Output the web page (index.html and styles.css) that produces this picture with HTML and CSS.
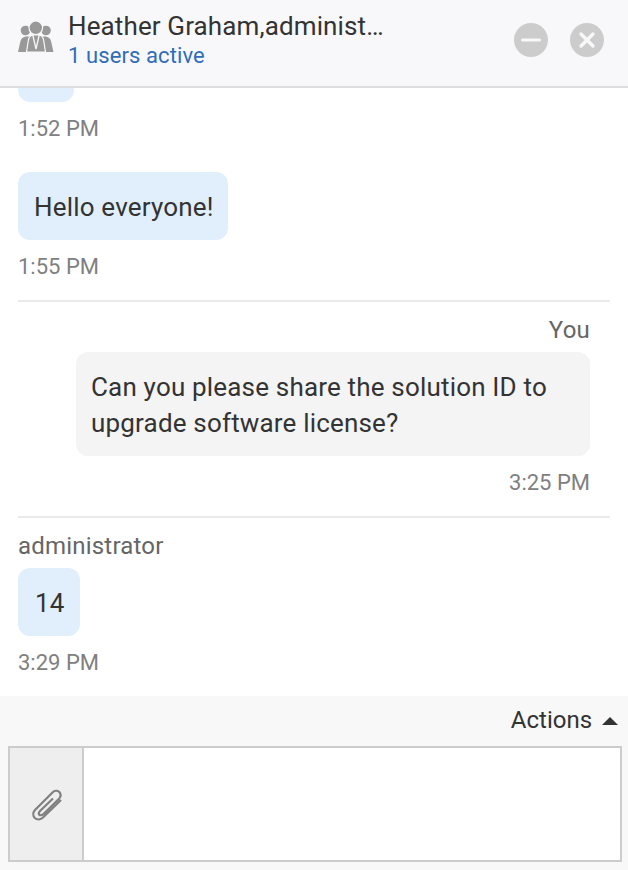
FILE: index.html
```html
<!DOCTYPE html>
<html lang="en">
<head>
<meta charset="utf-8">
<title>Chat</title>
<link rel="stylesheet" href="styles.css">
</head>
<body>
<div class="chat">
  <header class="head">
    <svg class="group" viewBox="0 0 36 32" width="36" height="32">
      <g fill="#999">
        <circle cx="7.500" cy="9.500" r="4.800"/><circle cx="28" cy="9.500" r="4.800"/>
        <path d="M0 31 L2.500 20 Q3.500 16 8 15.500 L12 15.500 L12 31 Z"/>
        <path d="M35.500 31 L33 20 Q32 16 27.500 15.500 L23.500 15.500 L23.500 31 Z"/>
      </g>
      <g fill="#999" stroke="#f8f8fa" stroke-width="1.200">
        <circle cx="17.800" cy="6.800" r="6.800"/>
        <path d="M8.500 31 L10.500 18.500 Q11.500 14.500 15 14 L21 14 Q24.500 14.500 25.500 18.500 L27.500 31 Z"/>
      </g>
      <path d="M14.800 14 L18 28 L21.200 14" fill="none" stroke="#f8f8fa" stroke-width="1.300"/>
    </svg>
    <div class="titles">
      <div class="name">Heather Graham,administ…</div>
      <div class="active">1 users active</div>
    </div>
    <div class="btns">
      <svg class="btn" viewBox="0 0 34 34" width="34" height="34"><circle cx="17" cy="17" r="17" fill="#ccc"/><path d="M8.500 17 H25.500" stroke="#f8f8fa" stroke-width="3" stroke-linecap="round"/></svg>
      <svg class="btn" viewBox="0 0 34 34" width="34" height="34"><circle cx="17" cy="17" r="17" fill="#ccc"/><path d="M11 11 L23 23 M23 11 L11 23" stroke="#f8f8fa" stroke-width="3.400" stroke-linecap="round"/></svg>
    </div>
  </header>
  <main class="log">
    <div class="group-msg first">
      <div class="bubble in stub"></div>
      <div class="time">1:52 PM</div>
      <div class="bubble in spaced">Hello everyone!</div>
      <div class="time">1:55 PM</div>
    </div>
    <div class="group-msg mine">
      <div class="who">You</div>
      <div class="bubble out">Can you please share the solution ID to upgrade software license?</div>
      <div class="time">3:25 PM</div>
    </div>
    <div class="group-msg">
      <div class="who">administrator</div>
      <div class="bubble in num">14</div>
      <div class="time">3:29 PM</div>
    </div>
  </main>
  <footer class="foot">
    <div class="actions">Actions <span class="caret"></span></div>
    <div class="composer">
      <div class="attach">
        <svg class="clip" viewBox="0 0 32 32" width="32" height="32"><path d="M31 11 L13 28.500 C10.500 30.800 7 30.800 4.800 29 C2.800 27 2.800 23.500 5 21 L22.500 3.500 C24.500 1.500 27.500 1.500 29.300 3 C31 5 30.800 7.800 29 9.700 L13.500 25 C12 26.500 10 26.500 9.300 25.700 C8.500 24.800 8.700 23.500 10 22 L23 9.500" fill="none" stroke="#808080" stroke-width="2.200"/></svg>
      </div>
      <div class="field"></div>
    </div>
  </footer>
</div>
</body>
</html>
```
FILE: styles.css
```css
* { box-sizing: border-box; }
html, body { margin: 0; padding: 0; background: #fff; }
body { font-family: Roboto, "Liberation Sans", sans-serif; color: #333; }
.chat { width: 628px; height: 870px; display: flex; flex-direction: column; overflow: hidden; }
.head { height: 88px; flex: none; display: flex; align-items: center; background: #f8f8fa; border-bottom: 2px solid #ddd; padding: 0 24px 0 18px; }
.group { flex: none; margin-right: 15px; margin-top: -12px; }
.titles { flex: 1; min-width: 0; margin-top: -4px; margin-left: -1px; }
.name { font-size: 26px; line-height: 30px; color: #333; letter-spacing: 0.12px; }
.active { font-size: 22px; line-height: 30px; color: #2f6db8; letter-spacing: 0.1px; }
.btns { display: flex; gap: 22px; margin-top: -6px; }
.log { flex: 1; min-height: 0; padding: 0 18px; }
.group-msg { padding-bottom: 20px; border-bottom: 2px solid #eaeaea; margin-bottom: 14px; }
.group-msg:last-child { border-bottom: 0; margin-bottom: 0; }
.bubble { background: #e1effd; border-radius: 12px; font-size: 26px; line-height: 36px; padding: 17px 15px 15px 16px; width: fit-content; color: #333; letter-spacing: 0.18px; }
.stub { width: 56px; height: 14px; padding: 0; border-radius: 0 0 12px 12px; }
.spaced { margin-top: 30px; padding-right: 14px; }
.num { padding-left: 17px; }
.time { font-size: 22px; line-height: 26px; color: #808080; margin-top: 14px; }
.who { font-size: 24px; line-height: 28px; color: #666; margin-bottom: 8px; letter-spacing: 0.2px; }
.mine { padding-right: 20px; display: flex; flex-direction: column; align-items: flex-end; }
.out { background: #f4f4f4; width: 514px; padding-left: 15px; }
.foot { flex: none; height: 174px; background: #f8f8f8; padding: 8px 6px 8px 8px; display: flex; flex-direction: column; }
.actions { height: 42px; text-align: right; font-size: 24px; line-height: 32px; padding-right: 4px; color: #333; }
.caret { display: inline-block; width: 0; height: 0; border-left: 8px solid transparent; border-right: 8px solid transparent; border-bottom: 8px solid #333; margin-left: 4px; vertical-align: 3px; }
.composer { display: flex; height: 116px; border: 2px solid #ccc; background: #fff; }
.attach { width: 74px; flex: none; background: #eee; border-right: 2px solid #ccc; display: flex; align-items: center; justify-content: center; }
.clip { margin-top: 2px; }
.field { flex: 1; }
```
